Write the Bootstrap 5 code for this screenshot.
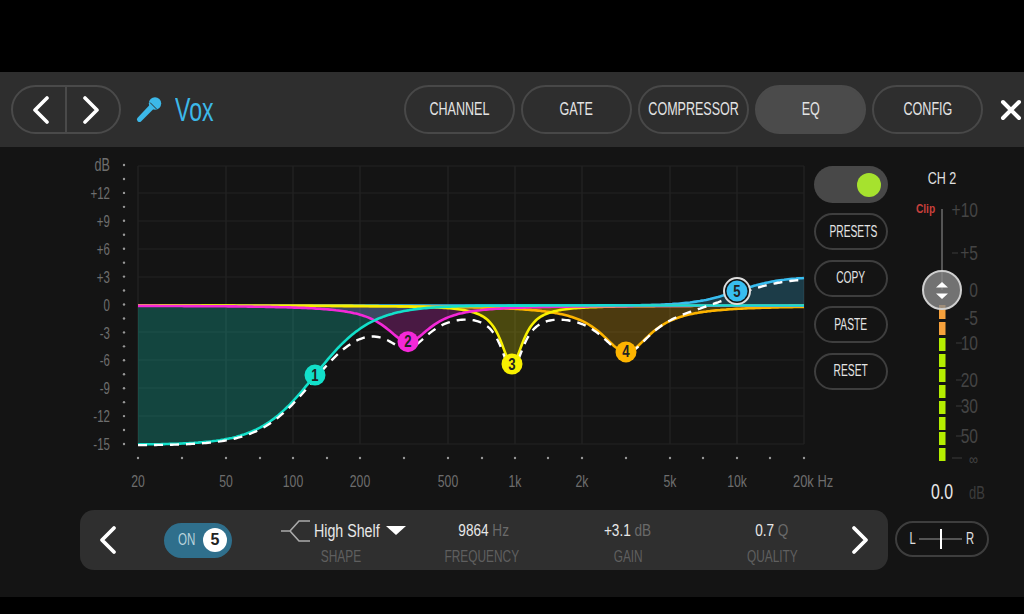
<!DOCTYPE html>
<html lang="en">
<head>
  <meta charset="UTF-8" />
  <meta name="viewport" content="width=device-width, initial-scale=1.0" />
  <title>EQ - Vox</title>
  <link href="https://cdn.jsdelivr.net/npm/bootstrap@5.3.2/dist/css/bootstrap.min.css" rel="stylesheet">
  <style>
    body { background: #000; overflow: hidden; font-family: "Liberation Sans", Arial, sans-serif; }
    svg text { font-family: "Liberation Sans", Arial, sans-serif; }
    .squeeze { display: inline-block; white-space: nowrap; transform: scaleX(.66); }
    .app-shell { padding-top: 72px; height: 614px; }
    .top-bar { height: 75px; background: #2e2e2e; padding: 0 2px 0 11px; }
    .step-group { width: 110px; height: 49px; border: 2px solid #4a4a4a; border-radius: 25px; }
    .step-group > div { flex: 1; }
    .step-group > div + div { border-left: 2px solid #4a4a4a; }
    .step-prev { margin-left: 4px; }
    .step-next { margin-right: 4px; }
    .mic-icon { margin-left: 15px; }
    .track-name { width: 40px; margin-left: 13px; color: #3cb8e8; font-size: 33px; white-space: nowrap; transform-origin: left center; transform: scaleX(.7); }
    .tab-row { margin-left: auto; gap: 6px; }
    .tab-pill { width: 111px; height: 49px; border: 2px solid #484848; border-radius: 25px; color: #e4e4e4; font-size: 19px; background: transparent; padding: 0; }
    .tab-pill.is-on { background: #4b4b4b; border-color: #4b4b4b; }
    .close-x { margin-left: 17px; }
    .eq-body { height: 450px; background: #141414; }
    .eq-top { height: 363px; }
    #eqChart { overflow: visible; }
    .side-col { width: 74px; margin-left: 4px; padding-top: 19px; }
    .power-switch { height: 37px; border-radius: 19px; background: #484848; padding-right: 7px; margin-bottom: 10px; }
    .power-dot { width: 24px; height: 24px; border-radius: 50%; background: #a6e22e; }
    .side-btn { height: 37px; border: 2px solid #3e3e3e; border-radius: 19px; color: #e4e4e4; font-size: 16px; margin-bottom: 9.5px; background: transparent; padding: 0; }
    .side-btn .squeeze { transform: scaleX(.64); }
    .band-row { padding-left: 80px; }
    .band-panel { width: 808px; height: 60px; background: #2f2f2f; border-radius: 14px; }
    .prev-band { margin-left: 16px; }
    .next-band { margin-left: auto; margin-right: 16px; }
    .on-pill { width: 68px; height: 35px; margin-left: 44px; border-radius: 18px; background: #2f6f8c; color: #b9d3dc; font-size: 17px; padding: 0 5px 0 10px; }
    .on-pill .squeeze { transform: scaleX(.68); }
    .on-num { width: 24px; height: 24px; border-radius: 50%; background: #fff; color: #222; font-weight: 700; font-size: 16px; }
    .param-col { text-align: center; line-height: 1; padding-top: 7px; }
    .param-val { color: #e8e8e8; font-size: 17px; height: 20px; white-space: nowrap; }
    .param-val .squeeze { transform: scaleX(.8); }
    .param-unit { color: #6a6a6a; }
    .param-lbl { color: #5f5f5f; font-size: 16.5px; margin-top: 6px; }
    .param-lbl .squeeze { transform: scaleX(.72); }
    .shape-col { width: 130px; margin-left: 44px; }
    .shape-val { padding-left: 5px; }
    .shape-icon { margin-top: -2px; }
    .shape-name { width: 66px; margin: -3px 0 0 3px; font-size: 18px; white-space: nowrap; text-align: left; transform-origin: left center; transform: scaleX(.79); }
    .shape-arrow { margin: -3px 0 0 6px; }
    .freq-col { width: 100px; margin-left: 28px; }
    .freq-col .param-lbl { margin-left: -4px; }
    .gain-col, .qual-col { width: 100px; margin-left: 44px; }
    .lr-btn { width: 94px; height: 36px; margin: 11px 0 0 7px; border: 2px solid #3e3e3e; border-radius: 18px; color: #e0e0e0; font-size: 17px; padding: 0 11px; }
    .lr-line { flex: 1; height: 2px; background: #555; margin: 0 2px; position: relative; }
    .lr-mark { position: absolute; left: 50%; top: -9px; width: 2px; height: 20px; margin-left: -1px; background: #fff; }
  </style>
</head>
<body>
  <div class="app-shell">
    <div class="top-bar d-flex align-items-center">
      <div class="step-group d-flex">
        <div class="d-flex align-items-center justify-content-center">
          <svg class="step-prev" width="20" height="28" viewBox="0 0 20 28"><path d="M16 2 L4 14 L16 26" fill="none" stroke="#fff" stroke-width="3.6" stroke-linecap="round" stroke-linejoin="round"/></svg>
        </div>
        <div class="d-flex align-items-center justify-content-center">
          <svg class="step-next" width="20" height="28" viewBox="0 0 20 28"><path d="M4 2 L16 14 L4 26" fill="none" stroke="#fff" stroke-width="3.6" stroke-linecap="round" stroke-linejoin="round"/></svg>
        </div>
      </div>
      <svg class="mic-icon" width="26" height="26" viewBox="0 0 26 26">
        <circle cx="19" cy="6.5" r="6.2" fill="#3cb8e8"/>
        <path d="M14 7.5 L18 11.5 L5 24.6 Q3.4 25.8 1.6 24.2 Q0.2 22.6 1.4 21 Z" fill="#3cb8e8"/>
        <path d="M14 5.5 L20.5 12" stroke="#2e2e2e" stroke-width="1"/>
      </svg>
      <div class="track-name">Vox</div>
      <div class="tab-row d-flex">
        <button class="tab-pill d-flex align-items-center justify-content-center"><span class="squeeze">CHANNEL</span></button>
        <button class="tab-pill d-flex align-items-center justify-content-center"><span class="squeeze">GATE</span></button>
        <button class="tab-pill d-flex align-items-center justify-content-center"><span class="squeeze">COMPRESSOR</span></button>
        <button class="tab-pill is-on d-flex align-items-center justify-content-center"><span class="squeeze">EQ</span></button>
        <button class="tab-pill d-flex align-items-center justify-content-center"><span class="squeeze">CONFIG</span></button>
      </div>
      <svg class="close-x" width="22" height="22" viewBox="0 0 22 22"><path d="M3 3 L19 19 M19 3 L3 19" stroke="#fff" stroke-width="4" stroke-linecap="round"/></svg>
    </div>

    <div class="eq-body">
      <div class="eq-top d-flex">
        <svg id="eqChart" width="810" height="363" viewBox="0 147 810 363"></svg>
        <div class="side-col d-flex flex-column">
          <div class="power-switch d-flex align-items-center justify-content-end"><div class="power-dot"></div></div>
          <button class="side-btn"><span class="squeeze">PRESETS</span></button>
          <button class="side-btn"><span class="squeeze">COPY</span></button>
          <button class="side-btn"><span class="squeeze">PASTE</span></button>
          <button class="side-btn"><span class="squeeze">RESET</span></button>
        </div>
        <svg id="fader" class="ms-1" width="110" height="363" viewBox="892 147 110 363"></svg>
      </div>
      <div class="band-row d-flex">
        <div class="band-panel d-flex align-items-center">
          <svg class="prev-band" width="24" height="30" viewBox="0 0 24 30"><path d="M18 3 L6 15 L18 27" fill="none" stroke="#fff" stroke-width="3.8" stroke-linecap="round" stroke-linejoin="round"/></svg>
          <div class="on-pill d-flex align-items-center justify-content-between">
            <span class="squeeze">ON</span>
            <div class="on-num d-flex align-items-center justify-content-center">5</div>
          </div>
          <div class="param-col shape-col">
            <div class="param-val shape-val d-flex align-items-center">
              <svg class="shape-icon" width="30" height="24" viewBox="0 0 30 24"><path d="M0 12 H9 L18 2 H29 M9 12 L18 22 H29" fill="none" stroke="#aaa" stroke-width="1.6"/></svg>
              <div class="shape-name">High Shelf</div>
              <svg class="shape-arrow" width="20" height="9" viewBox="0 0 20 9"><path d="M0 0 H20 L10 9 Z" fill="#fff"/></svg>
            </div>
            <div class="param-lbl"><span class="squeeze">SHAPE</span></div>
          </div>
          <div class="param-col freq-col"><div class="param-val"><span class="squeeze">9864 <span class="param-unit">Hz</span></span></div><div class="param-lbl"><span class="squeeze">FREQUENCY</span></div></div>
          <div class="param-col gain-col"><div class="param-val"><span class="squeeze">+3.1 <span class="param-unit">dB</span></span></div><div class="param-lbl"><span class="squeeze">GAIN</span></div></div>
          <div class="param-col qual-col"><div class="param-val"><span class="squeeze">0.7 <span class="param-unit">Q</span></span></div><div class="param-lbl"><span class="squeeze">QUALITY</span></div></div>
          <svg class="next-band" width="24" height="30" viewBox="0 0 24 30"><path d="M6 3 L18 15 L6 27" fill="none" stroke="#fff" stroke-width="3.8" stroke-linecap="round" stroke-linejoin="round"/></svg>
        </div>
        <div class="lr-btn d-flex align-items-center">
          <span class="squeeze">L</span><div class="lr-line"><div class="lr-mark"></div></div><span class="squeeze">R</span>
        </div>
      </div>
    </div>
  </div>

  <script src="https://cdn.jsdelivr.net/npm/bootstrap@5.3.2/dist/js/bootstrap.bundle.min.js"></script>
  <script>
    const zeroY = 305.5, dbPx = 9.28;
    const bell = (c, w, g) => x => g / (1 + ((x - c) / w) ** 2);
    const bands = [
      { n: 5, color: '#38bdf0', f: x => 3.1 / (1 + Math.exp(-(x - 737) / 22)), nx: 737, ring: true },
      { n: 4, color: '#fdb400', f: bell(626, 31, -5), nx: 626 },
      { n: 3, color: '#f8f000', f: bell(512, 14, -6.3), nx: 512 },
      { n: 2, color: '#f428d8', f: bell(408, 28, -3.9), nx: 408 },
      { n: 1, color: '#12e0ca', f: x => -15 / (1 + Math.exp((x - 315) / 28)), nx: 315 }
    ];
    const yOf = db => zeroY - db * dbPx;
    function curve(fn) {
      let d = '';
      for (let x = 138; x <= 804; x += 2) d += (d ? 'L' : 'M') + x + ' ' + yOf(fn(x)).toFixed(1);
      return d;
    }
    // narrow text: the app's font is condensed, so squeeze it horizontally
    function label(x, y, txt, size, fill, anchor, sx, extra) {
      return `<text transform="translate(${x} ${y}) scale(${sx} 1)" text-anchor="${anchor}" font-size="${size}" fill="${fill}" ${extra || ''}>${txt}</text>`;
    }
    let out = '';
    // grid
    [226, 293, 360, 448, 515, 582, 670, 737, 138, 804].forEach(x => {
      out += `<line x1="${x}" x2="${x}" y1="166" y2="444" stroke="#262626"/>`;
    });
    [166, 193, 221, 249, 277, 332, 360, 388, 416, 444].forEach(y => {
      out += `<line x1="138" x2="804" y1="${y}" y2="${y}" stroke="#232323"/>`;
    });
    // axis labels
    [['dB', 165], ['+12', 193], ['+9', 221], ['+6', 249], ['+3', 277], ['0', 305], ['-3', 333], ['-6', 360], ['-9', 388], ['-12', 416], ['-15', 444]].forEach(l => {
      out += label(110, l[1] + 6, l[0], l[0] === 'dB' ? 17.5 : 16, '#6e6e6e', 'end', .72);
    });
    for (let i = 0; i < 21; i++) out += `<circle cx="124" cy="${165 + i * 13.95}" r="1.2" fill="#999"/>`;
    [138, 182, 226, 260, 293, 327, 360, 404, 448, 482, 515, 548, 582, 626, 670, 703, 737, 770, 804].forEach(x => {
      out += `<circle cx="${x}" cy="458" r="1.2" fill="#999"/>`;
    });
    [['20', 138], ['50', 226], ['100', 293], ['200', 360], ['500', 448], ['1k', 515], ['2k', 582], ['5k', 670], ['10k', 737]].forEach(l => {
      out += label(l[1], 487, l[0], 17, '#6e6e6e', 'middle', .72);
    });
    out += label(793, 487, '20k Hz', 17, '#6e6e6e', 'start', .76);
    // band fills, then lines
    bands.forEach(b => {
      out += `<path d="${curve(b.f)}L804 ${zeroY}L138 ${zeroY}Z" fill="${b.color}" fill-opacity=".24"/>`;
    });
    bands.forEach(b => {
      out += `<path d="${curve(b.f)}" fill="none" stroke="${b.color}" stroke-width="2.6"/>`;
    });
    const sum = x => bands.reduce((a, b) => a + b.f(x), 0);
    out += `<path d="${curve(sum)}" fill="none" stroke="#fff" stroke-width="2.4" stroke-dasharray="9 7"/>`;
    // nodes
    bands.forEach(b => {
      const cy = yOf(b.f(b.nx)).toFixed(1);
      if (b.ring) out += `<circle cx="${b.nx}" cy="${cy}" r="13" fill="#141414" stroke="#ddd" stroke-width="2"/>`;
      out += `<circle cx="${b.nx}" cy="${cy}" r="10.5" fill="${b.color}"/>`;
      out += label(b.nx, +cy + 5.5, b.n, 16, '#222', 'middle', .82, 'font-weight="700"');
    });
    document.getElementById('eqChart').innerHTML = out;

    // fader
    let fd = '';
    fd += label(942, 184, 'CH 2', 17, '#e0e0e0', 'middle', .74);
    fd += label(925.5, 213, 'Clip', 12, '#c9403c', 'middle', .85, 'font-weight="700"');
    fd += `<line x1="942" x2="942" y1="209" y2="290" stroke="#555" stroke-width="2"/>`;
    [['+10', 210, 0], ['+5', 253, 1], ['0', 290, 0], ['-5', 318, 0], ['10', 343, 1], ['20', 380, 1], ['30', 406, 1], ['50', 436, 1], ['∞', 458, 1]].forEach(l => {
      fd += label(978, l[1] + 7, l[0], l[0] === '∞' ? 16 : 20, '#444', 'end', .78);
      if (l[2]) fd += `<line x1="${l[0] === '∞' || l[0] === '+5' ? 952 : 956}" x2="${l[0] === '∞' ? 962 : l[0] === '+5' ? 958 : 962}" y1="${l[1]}" y2="${l[1]}" stroke="#3a3a3a"/>`;
    });
    [[305, 14], [322, 13], [338, 13], [354, 13], [369, 13], [385, 13], [401, 13], [417, 13], [432, 13], [448, 13]].forEach((s, i) => {
      fd += `<rect x="939" y="${s[0]}" width="6.5" height="${s[1]}" fill="${i < 2 ? '#f6a13c' : '#b4ee00'}"/>`;
    });
    fd += `<circle cx="942" cy="290" r="19" fill="#8a8a8a" fill-opacity=".8" stroke="#cfcfcf" stroke-width="2"/>`;
    fd += `<path d="M942 282 L948 287.5 H936 Z M936 293.5 H948 L942 299 Z" fill="#fff"/>`;
    fd += label(942, 499, '0.0', 22, '#e8e8e8', 'middle', .72);
    fd += label(977, 499, 'dB', 18, '#3c3c3c', 'middle', .72);
    document.getElementById('fader').innerHTML = fd;
  </script>
</body>
</html>
